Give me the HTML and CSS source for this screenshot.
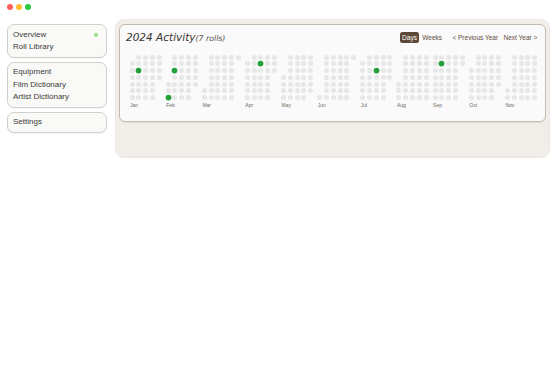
FILE: index.html
```html
<!DOCTYPE html>
<html lang="en">
<head>
<meta charset="utf-8">
<title>Overview</title>
<link rel="stylesheet" href="styles.css">
</head>
<body>
<div class="titlebar">
  <span class="light red"></span><span class="light yellow"></span><span class="light green"></span>
</div>
<div class="app">
  <nav class="sidebar">
    <div class="navcard">
      <div class="navitem">Overview<span class="status"></span></div>
      <div class="navitem">Roll Library</div>
    </div>
    <div class="navcard">
      <div class="navitem">Equipment</div>
      <div class="navitem">Film Dictionary</div>
      <div class="navitem">Artist Dictionary</div>
    </div>
    <div class="navcard">
      <div class="navitem">Settings</div>
    </div>
  </nav>
  <main class="panel">
    <section class="card">
      <header class="card-head">
        <h1 class="title">2024 Activity<span class="count">(7 rolls)</span></h1>
        <div class="controls">
          <div class="group">
            <span class="btn active">Days</span>
            <span class="btn">Weeks</span>
          </div>
          <div class="group">
            <span class="btn">&lt; Previous Year</span>
            <span class="btn">Next Year &gt;</span>
          </div>
        </div>
      </header>
      <div class="calendar">
        <div class="month">
          <div class="days s2">
            <i></i><i></i><i></i><i></i><i></i><i></i><i></i><i></i><i class="on"></i><i></i>
            <i></i><i></i><i></i><i></i><i></i><i></i><i></i><i></i><i></i><i></i>
            <i></i><i></i><i></i><i></i><i></i><i></i><i></i><i></i><i></i><i></i>
            <i></i>
          </div>
          <span class="label">Jan</span>
        </div>
        <div class="month">
          <div class="days s5">
            <i></i><i></i><i class="on"></i><i></i><i></i><i class="on"></i><i></i><i></i><i></i><i></i>
            <i></i><i></i><i></i><i></i><i></i><i></i><i></i><i></i><i></i><i></i>
            <i></i><i></i><i></i><i></i><i></i><i></i><i></i><i></i><i></i>
          </div>
          <span class="label">Feb</span>
        </div>
        <div class="month">
          <div class="days s6">
            <i></i><i></i><i></i><i></i><i></i><i></i><i></i><i></i><i></i><i></i>
            <i></i><i></i><i></i><i></i><i></i><i></i><i></i><i></i><i></i><i></i>
            <i></i><i></i><i></i><i></i><i></i><i></i><i></i><i></i><i></i><i></i>
            <i></i>
          </div>
          <span class="label">Mar</span>
        </div>
        <div class="month">
          <div class="days s2">
            <i></i><i></i><i></i><i></i><i></i><i></i><i></i><i></i><i></i><i></i>
            <i></i><i></i><i></i><i></i><i class="on"></i><i></i><i></i><i></i><i></i><i></i>
            <i></i><i></i><i></i><i></i><i></i><i></i><i></i><i></i><i></i><i></i>
          </div>
          <span class="label">Apr</span>
        </div>
        <div class="month">
          <div class="days s4">
            <i></i><i></i><i></i><i></i><i></i><i></i><i></i><i></i><i></i><i></i>
            <i></i><i></i><i></i><i></i><i></i><i></i><i></i><i></i><i></i><i></i>
            <i></i><i></i><i></i><i></i><i></i><i></i><i></i><i></i><i></i><i></i>
            <i></i>
          </div>
          <span class="label">May</span>
        </div>
        <div class="month">
          <div class="days s7">
            <i></i><i></i><i></i><i></i><i></i><i></i><i></i><i></i><i></i><i></i>
            <i></i><i></i><i></i><i></i><i></i><i></i><i></i><i></i><i></i><i></i>
            <i></i><i></i><i></i><i></i><i></i><i></i><i></i><i></i><i></i><i></i>
          </div>
          <span class="label">Jun</span>
        </div>
        <div class="month">
          <div class="days s2">
            <i></i><i></i><i></i><i></i><i></i><i></i><i></i><i></i><i></i><i></i>
            <i></i><i></i><i></i><i></i><i></i><i class="on"></i><i></i><i></i><i></i><i></i>
            <i></i><i></i><i></i><i></i><i></i><i></i><i></i><i></i><i></i><i></i>
            <i></i>
          </div>
          <span class="label">Jul</span>
        </div>
        <div class="month">
          <div class="days s5">
            <i></i><i></i><i></i><i></i><i></i><i></i><i></i><i></i><i></i><i></i>
            <i></i><i></i><i></i><i></i><i></i><i></i><i></i><i></i><i></i><i></i>
            <i></i><i></i><i></i><i></i><i></i><i></i><i></i><i></i><i></i><i></i>
            <i></i>
          </div>
          <span class="label">Aug</span>
        </div>
        <div class="month">
          <div class="days s1">
            <i></i><i></i><i></i><i></i><i></i><i></i><i></i><i></i><i class="on"></i><i></i>
            <i></i><i></i><i></i><i></i><i></i><i></i><i></i><i></i><i></i><i></i>
            <i></i><i></i><i></i><i></i><i></i><i></i><i></i><i></i><i></i><i></i>
          </div>
          <span class="label">Sep</span>
        </div>
        <div class="month">
          <div class="days s3">
            <i></i><i></i><i></i><i></i><i></i><i></i><i></i><i></i><i></i><i></i>
            <i></i><i></i><i></i><i></i><i></i><i></i><i></i><i></i><i></i><i></i>
            <i></i><i></i><i></i><i></i><i></i><i></i><i></i><i></i><i></i><i></i>
            <i></i>
          </div>
          <span class="label">Oct</span>
        </div>
        <div class="month">
          <div class="days s6">
            <i></i><i></i><i></i><i></i><i></i><i></i><i></i><i></i><i></i><i></i>
            <i></i><i></i><i></i><i></i><i></i><i></i><i></i><i></i><i></i><i></i>
            <i></i><i></i><i></i><i></i><i></i><i></i><i></i><i></i><i></i><i></i>
          </div>
          <span class="label">Nov</span>
        </div>
      </div>
    </section>
  </main>
</div>
</body>
</html>
```
FILE: styles.css
```css
* { box-sizing: border-box; }
html, body { margin: 0; padding: 0; background: #ffffff; }
body {
  width: 555px;
  height: 367px;
  overflow: hidden;
  font-family: "Liberation Sans", Arial, sans-serif;
  color: #333;
}

.titlebar {
  height: 19px;
  display: flex;
  align-items: flex-start;
  gap: 3px;
  padding: 4px 0 0 7px;
}
.light {
  width: 6px;
  height: 6px;
  border-radius: 50%;
}
.red { background: #fe5f57; }
.yellow { background: #febc2e; }
.green { background: #28c840; }

.app {
  display: flex;
  gap: 8px;
  padding: 0 5px 0 7px;
}

.sidebar {
  width: 100px;
  flex: none;
  margin-top: 5px;
  display: flex;
  flex-direction: column;
  gap: 3.5px;
}
.navcard {
  background: #f9f9f8;
  border: 1px solid #d2cfca;
  border-radius: 7px;
  padding: 3.5px 8px 3.5px 5px;
  box-shadow: 0 1px 1px rgba(0,0,0,0.04);
}
.navitem {
  display: flex;
  align-items: center;
  justify-content: space-between;
  font-size: 8px;
  line-height: 12.5px;
  color: #3c3a38;
}
.status {
  width: 4px;
  height: 4px;
  border-radius: 50%;
  background: #93e07c;
}

.panel {
  flex: 1;
  min-width: 0;
  height: 139px;
  background: #f1eee9;
  border: 1px solid #ebe7e0;
  border-radius: 9px;
  padding: 4px 3px;
}
.card {
  min-width: 0;
  background: #fafafa;
  border: 1px solid #c4bab0;
  border-radius: 6px;
  padding: 6px 6px 13px 6px;
  box-shadow: 0 1px 1px rgba(80,60,40,0.08);
}
.card-head {
  display: flex;
  align-items: center;
  justify-content: space-between;
  height: 13px;
}
.title {
  margin: 0;
  font-family: "DejaVu Sans", Verdana, sans-serif;
  font-style: italic;
  font-weight: normal;
  font-size: 10.5px;
  line-height: 13px;
  color: #3a3431;
  white-space: nowrap;
}
.count {
  font-size: 7.8px;
  color: #564c46;
}
.controls {
  display: flex;
  align-items: center;
  gap: 7px;
}
.group {
  display: flex;
  gap: 2px;
}
.btn {
  font-size: 6.5px;
  line-height: 11px;
  padding: 0 1.7px;
  border-radius: 2.5px;
  color: #5b4a3c;
  white-space: nowrap;
}
.btn.active {
  background: #5c4937;
  color: #ffffff;
}

.calendar {
  display: flex;
  gap: 4px;
  margin-top: 10.5px;
  padding-left: 3.5px;
  overflow: hidden;
}
.month {
  flex: none;
  display: flex;
  flex-direction: column;
}
.days {
  display: grid;
  grid-template-rows: repeat(7, 5px);
  grid-auto-flow: column;
  grid-auto-columns: 5px;
  gap: 1.8px;
}
.days i {
  display: block;
  border-radius: 50%;
  background: #e7e7e7;
}
.days i.on {
  background: #23a03a;
  transform: scale(1.15);
}
.s1 i:first-child { grid-row-start: 1; }
.s2 i:first-child { grid-row-start: 2; }
.s3 i:first-child { grid-row-start: 3; }
.s4 i:first-child { grid-row-start: 4; }
.s5 i:first-child { grid-row-start: 5; }
.s6 i:first-child { grid-row-start: 6; }
.s7 i:first-child { grid-row-start: 7; }
.label {
  margin-top: 2px;
  font-size: 5px;
  line-height: 6px;
  color: #6a6a6a;
  padding-left: 0.5px;
}
```
